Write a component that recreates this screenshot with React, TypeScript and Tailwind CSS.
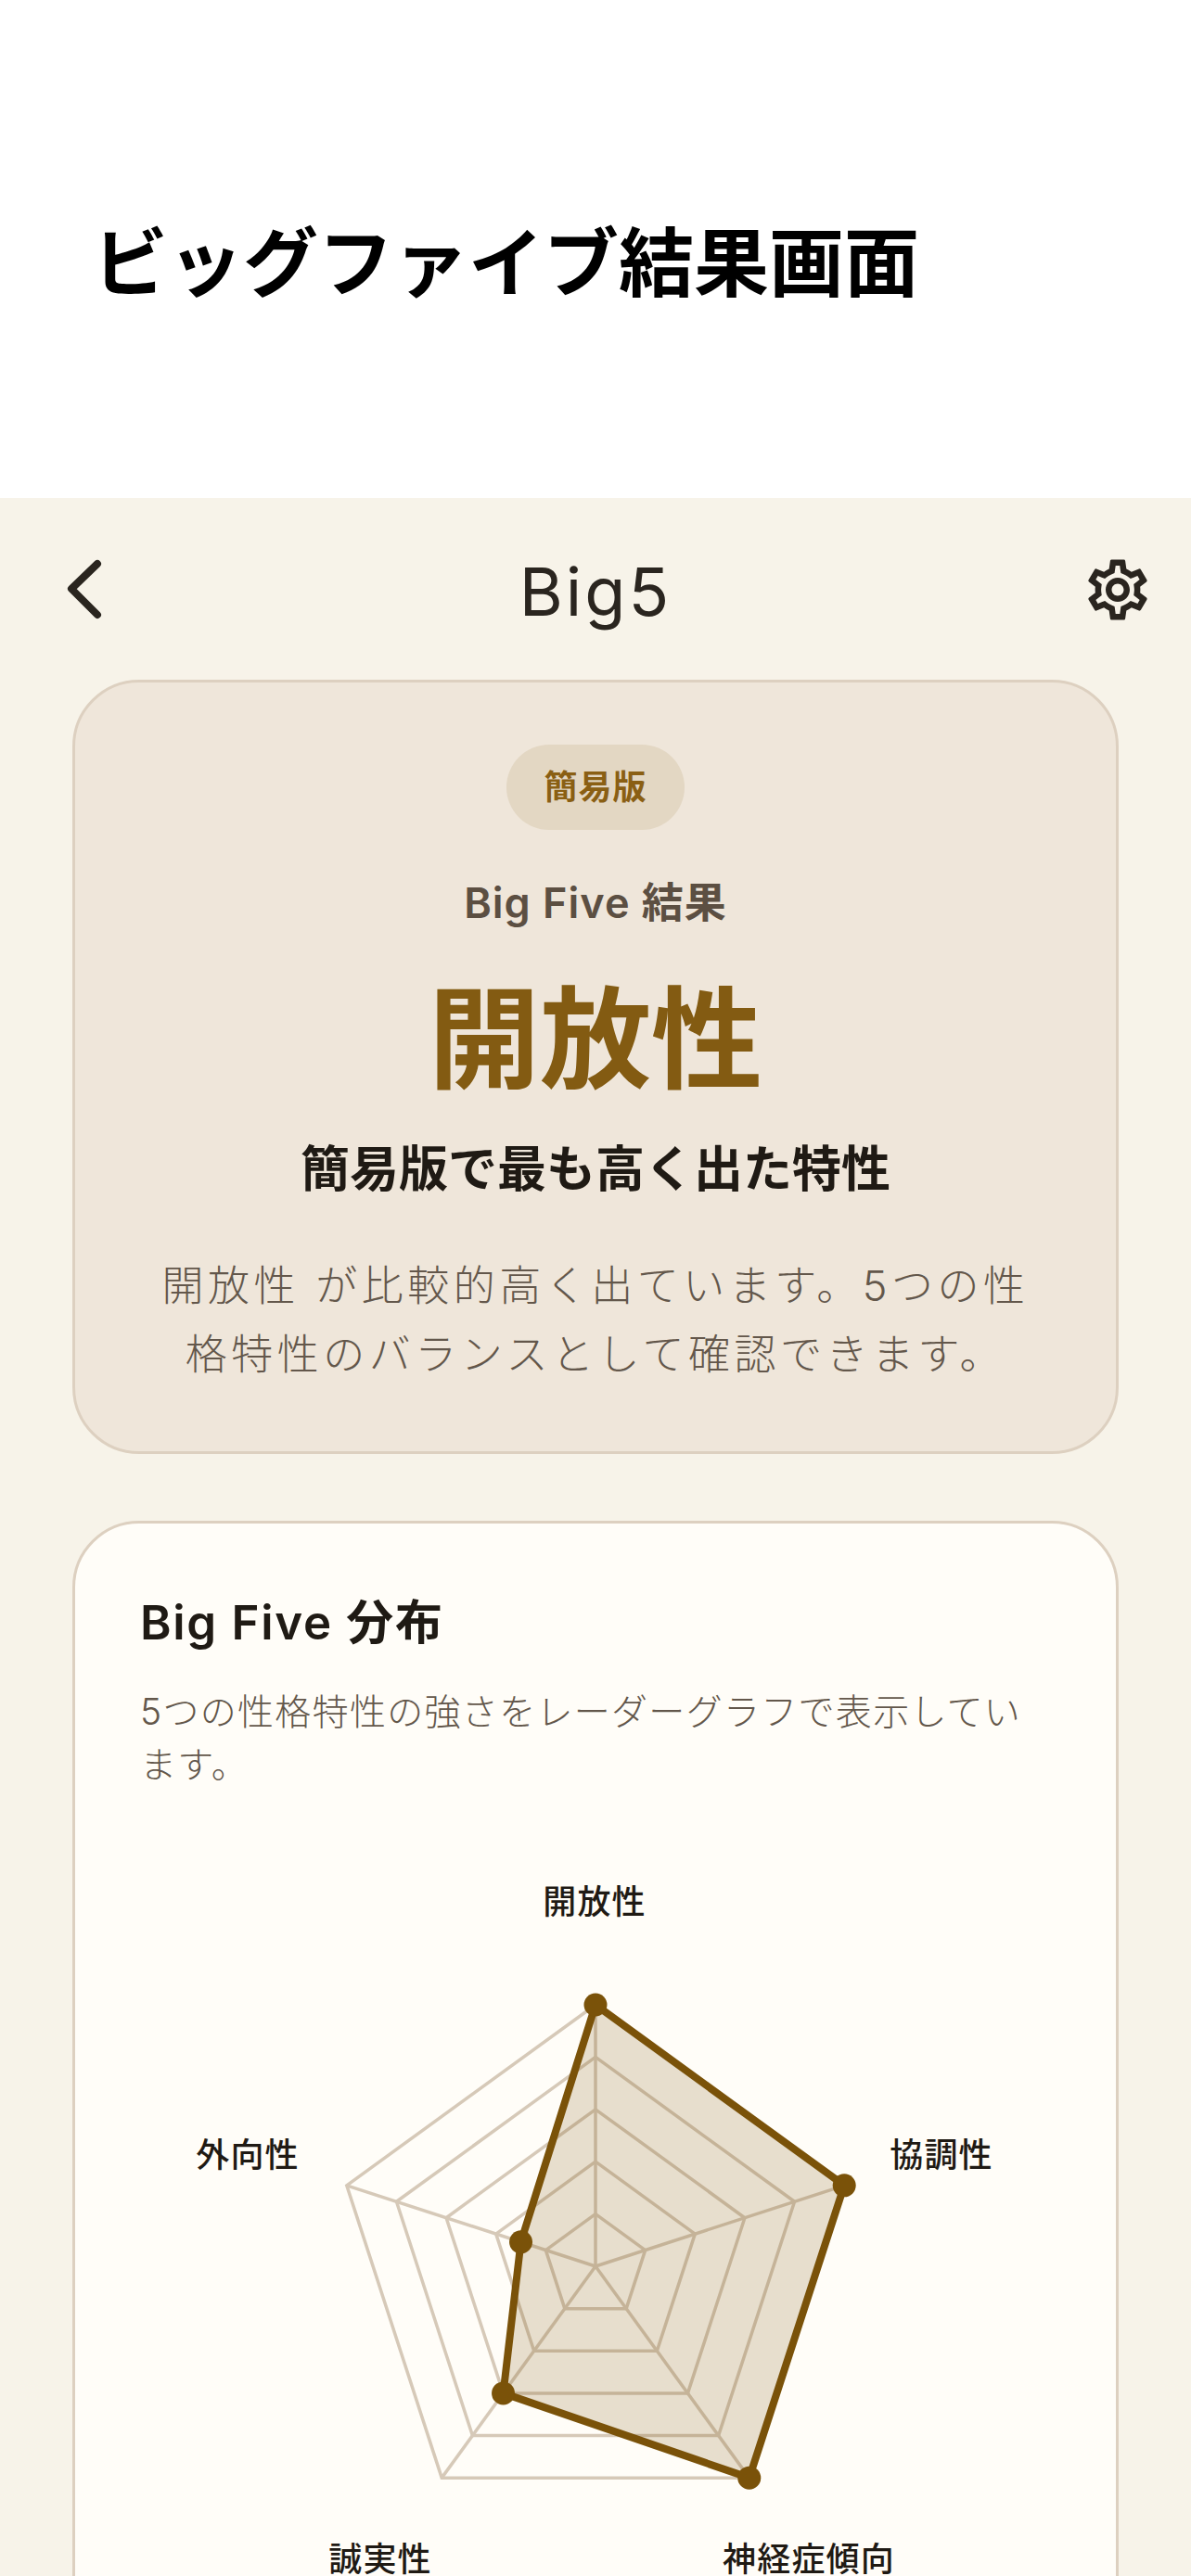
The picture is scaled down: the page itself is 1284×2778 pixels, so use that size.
import { MdOutlineSettings } from 'react-icons/md';

const jp = "font-['Inter','Noto_Sans_CJK_JP',sans-serif]";

const CX = 642;
const CY = 444;
const R = 282;
const angle = (i: number) => (-90 + i * 72) * (Math.PI / 180);
const pt = (i: number, r: number) => `${CX + Math.cos(angle(i)) * r},${CY + Math.sin(angle(i)) * r}`;
const ring = (s: number) => [0, 1, 2, 3, 4].map((i) => pt(i, R * s)).join(' ');
const values = [1, 1, 1, 0.6, 0.3];

function RadarChart() {
  return (
    <svg viewBox="0 0 1284 800" className="block h-[800px] w-[1284px]">
      {[0.2, 0.4, 0.6, 0.8, 1].map((s) => (
        <polygon key={s} points={ring(s)} fill="none" stroke="#d6c9b8" strokeWidth="3.5" />
      ))}
      {[0, 1, 2, 3, 4].map((i) => (
        <polyline key={i} points={`${CX},${CY} ${pt(i, R)}`} fill="none" stroke="#d6c9b8" strokeWidth="3.5" />
      ))}
      <polygon
        points={values.map((v, i) => pt(i, R * v)).join(' ')}
        fill="#7a5209"
        fillOpacity="0.18"
        stroke="#7a5209"
        strokeWidth="8"
        strokeLinejoin="round"
      />
      {values.map((v, i) => {
        const [x, y] = pt(i, R * v).split(',').map(Number);
        return <circle key={i} cx={x} cy={y} r="12.5" fill="#7a5209" />;
      })}
      <g fill="#1f1a14" fontSize="36" fontWeight="500" letterSpacing="1.2" fontFamily="Inter, 'Noto Sans CJK JP', sans-serif" textAnchor="middle">
        <text x="641" y="64">開放性</text>
        <text x="1015" y="337">協調性</text>
        <text x="872" y="773">神経症傾向</text>
        <text x="410" y="773">誠実性</text>
        <text x="267" y="337">外向性</text>
      </g>
    </svg>
  );
}

export default function App() {
  return (
    <div className={`h-[2778px] w-[1284px] overflow-hidden bg-white ${jp}`}>
      <div className="flex h-[537px] items-center px-[100px] pt-[32px]">
        <h1 className="text-[81px] font-bold leading-none text-black">ビッグファイブ結果画面</h1>
      </div>
      <div className="h-[2241px] bg-[#f7f3e9]">
        <div className="relative flex h-[196px] items-center justify-center pt-[6px]">
          <svg viewBox="0 0 90 90" className="absolute left-[60px] top-[53px] h-[90px] w-[90px]" fill="none" stroke="#2a251f" strokeWidth="8" strokeLinecap="round" strokeLinejoin="round">
            <path d="M45 18 17 45l28 28" />
          </svg>
          <span className="text-[72px] leading-none tracking-[3px] text-[#2a251f]">Big5</span>
          <MdOutlineSettings className="absolute left-[1166px] top-[60px] h-[78px] w-[78px] text-[#2a251f]" />
        </div>
        <div className="mx-[78px] flex h-[835px] flex-col items-center rounded-[72px] border-[3px] border-[#ddd0c0] bg-[#efe6da] pt-[67px]">
          <div className="flex h-[92px] w-[192px] items-center justify-center rounded-full bg-[#e3d7c3] text-[36px] font-semibold tracking-[1px] text-[#8a5f14]">簡易版</div>
          <p className="mt-[46px] text-[45px] font-semibold leading-[66px] tracking-[1px] text-[#5c4f42]">Big Five 結果</p>
          <p className="mt-[40px] text-[120px] font-bold leading-[150px] text-[#835b12]">開放性</p>
          <p className="mt-[27px] text-[53px] font-bold leading-[74px] text-[#1f1a14]">簡易版で最も高く出た特性</p>
          <p className="mt-[52px] w-[960px] text-center text-[45px] font-light leading-[74px] tracking-[4.5px] text-[#63574b]">開放性 が比較的高く出ています。5つの性格特性のバランスとして確認できます。</p>
        </div>
        <div className="mx-[78px] mt-[72px] h-[1300px] rounded-[72px] border-[3px] border-[#ddd0c0] bg-[#fffdf8] px-[70px] pt-[72px]">
          <h2 className="text-[51px] font-semibold leading-[70px] tracking-[1.7px] text-[#1f1a14]">Big Five 分布</h2>
          <p className="mt-[32px] text-[39px] font-light leading-[57px] tracking-[1.3px] text-[#63574b]">5つの性格特性の強さをレーダーグラフで表示しています。</p>
          <div className="-ml-[151px] mt-[69px]"><RadarChart /></div>
        </div>
      </div>
    </div>
  );
}
